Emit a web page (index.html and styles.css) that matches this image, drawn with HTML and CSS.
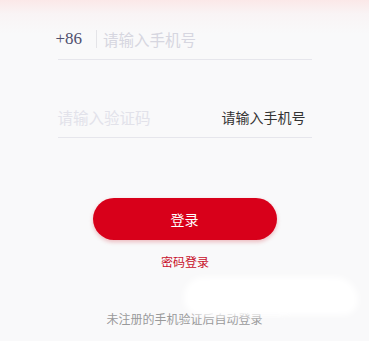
FILE: index.html
```html
<!DOCTYPE html>
<html>
<head>
<meta charset="UTF-8">
<title>登录</title>
<link rel="stylesheet" href="styles.css">
</head>
<body>
<div class="page">
<div class="form">
<div class="row phone">
<span class="prefix">+86</span>
<span class="sep"></span>
<span class="placeholder">请输入手机号</span>
</div>
<div class="row code">
<span class="placeholder light">请输入验证码</span>
<span class="getcode">请输入手机号</span>
</div>
</div>
<div class="btn">登录</div>
<div class="alt">密码登录</div>
<div class="tip">未注册的手机验证后自动登录</div>
<div class="blob"></div>
<div class="blob two"></div>
</div>
</body>
</html>
```
FILE: styles.css
```css
html, body {
	margin: 0;
	padding: 0;
}

body {
	background-color: #f9f9fa;
	font-family: "Noto Sans CJK SC", "Noto Sans", sans-serif;
}

.page {
	position: relative;
	height: 341px;
	overflow: hidden;
	background: linear-gradient(to bottom, #fbe8e8 0, #f9f4f5 14px, #f9f9fa 34px);
	padding-top: 19px;
	box-sizing: border-box;
}

.form {
	width: 254px;
	margin: 0 auto;
}

.row {
	display: flex;
	align-items: center;
	height: 40px;
	border-bottom: 1px solid #e6e6ec;
}

.row.code {
	margin-top: 37px;
	justify-content: space-between;
}

.prefix {
	font-family: "Liberation Serif", serif;
	font-size: 17px;
	color: #50506e;
	margin-left: -2px;
}

.sep {
	width: 1px;
	height: 18px;
	background-color: #e4e4e8;
	margin: 0 6px 0 14px;
}

.placeholder {
	font-size: 15.5px;
	color: #d6d6e0;
}

.placeholder.light {
	color: #e2e2ea;
}

.getcode {
	font-size: 14px;
	color: #333;
	margin-right: 6px;
}

.btn {
	width: 184px;
	height: 42px;
	margin: 60px auto 0;
	border-radius: 21px;
	background-color: #d8001a;
	box-shadow: 0 2px 4px rgba(200, 0, 20, 0.25);
	color: #fff;
	font-size: 14px;
	display: flex;
	align-items: center;
	justify-content: center;
}

.alt {
	text-align: center;
	font-size: 12px;
	color: #c8102b;
	margin-top: 13px;
	line-height: 17px;
	padding-left: 1px;
}

.tip {
	text-align: center;
	font-size: 12px;
	color: #9a9a9a;
	margin-top: 40px;
	line-height: 17px;
}

.blob {
	position: absolute;
	left: 184px;
	top: 277px;
	width: 174px;
	height: 38px;
	border-radius: 22px 26px 16px 18px;
	background-color: #fff;
	filter: blur(3px);
}

.blob.two {
	left: 200px;
	top: 300px;
	width: 90px;
	height: 14px;
	border-radius: 8px;
	opacity: 0.7;
}
```
